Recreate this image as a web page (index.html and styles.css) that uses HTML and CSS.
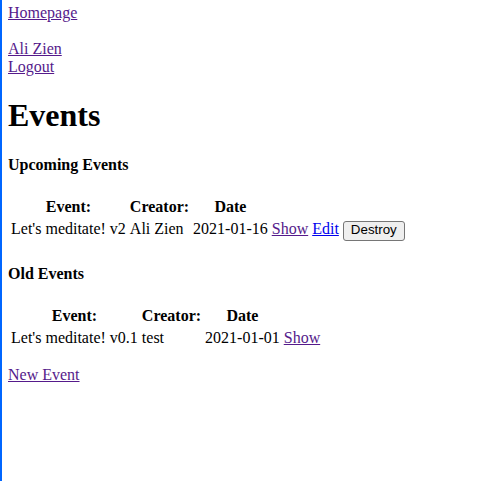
FILE: index.html
```html
<!DOCTYPE html>
<html>
<head>
<meta charset="utf-8">
<title>Events</title>
<link rel="stylesheet" href="styles.css">
</head>
<body>
<div class="nav">
  <a class="visited" href="#">Homepage</a>
</div>
<div class="user">
  <a class="visited" href="#">Ali Zien</a><br>
  <a class="visited" href="#">Logout</a>
</div>
<h1>Events</h1>
<h4>Upcoming Events</h4>
<table>
  <thead>
    <tr><th>Event:</th><th>Creator:</th><th>Date</th><th colspan="3"></th></tr>
  </thead>
  <tbody>
    <tr>
      <td>Let's meditate! v2</td>
      <td>Ali Zien</td>
      <td>2021-01-16</td>
      <td><a class="visited" href="#">Show</a></td>
      <td><a href="#">Edit</a></td>
      <td><form class="button-to"><button type="button">Destroy</button></form></td>
    </tr>
  </tbody>
</table>
<h4>Old Events</h4>
<table>
  <thead>
    <tr><th>Event:</th><th>Creator:</th><th>Date</th><th colspan="3"></th></tr>
  </thead>
  <tbody>
    <tr>
      <td>Let's meditate! v0.1</td>
      <td>test</td>
      <td>2021-01-01</td>
      <td><a class="visited" href="#">Show</a></td>
    </tr>
  </tbody>
</table>
<p><a class="visited" href="#">New Event</a></p>
</body>
</html>
```
FILE: styles.css
```css
html {
  min-height: 100%;
  border-left: 2px solid #0066ff;
  box-sizing: border-box;
}
body {
  margin: 4px 8px 8px 6px;
  font-family: "Liberation Serif", "Times New Roman", serif;
  font-size: 16px;
  color: #000;
}
a { color: #0000ee; }
a.visited { color: #551a8b; }
.user { margin-top: 18px; }
h1 { font-size: 32px; margin: 0.67em 0; }
h4 { font-size: 16px; margin: 1.33em 0; }
td { vertical-align: top; }
.button-to { margin: 0; }
button {
  appearance: none;
  -webkit-appearance: none;
  box-sizing: border-box;
  height: 19.5px;
  margin: 0;
  padding: 0 7px 2.5px;
  border: 1px solid #767676;
  border-radius: 3px;
  background: #efefef;
  color: #000;
  font-family: "Liberation Sans", Arial, sans-serif;
  font-size: 13.33px;
  line-height: 15px;
  vertical-align: baseline;
}
```
